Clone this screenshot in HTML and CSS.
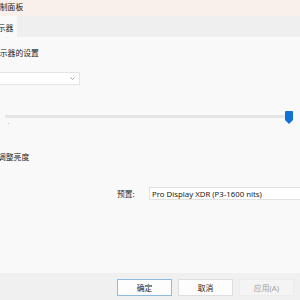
FILE: index.html
```html
<!DOCTYPE html>
<html lang="zh-CN">
<head>
  <meta charset="UTF-8" />
  <title>控制面板</title>
  <link rel="stylesheet" href="styles.css">
</head>
<body>
  <div class="window">
    <div class="titlebar">控制面板</div>

    <div class="tabs">
      <div class="tab active">显示器</div>
    </div>

    <div class="content">
      <div class="label">显示器的设置</div>

      <div class="select">
        <svg class="chevron" width="5" height="3" viewBox="0 0 5 3">
          <path d="M0.5 0.5 L2.5 2.5 L4.5 0.5" fill="none" stroke="#8a8a8a" stroke-width="0.8"/>
        </svg>
      </div>

      <div class="slider">
        <div class="track"></div>
        <span class="tick"></span>
        <svg class="thumb" width="8" height="13" viewBox="0 0 8 13">
          <path d="M1 0 H7 A1 1 0 0 1 8 1 V9 L4 13 L0 9 V1 A1 1 0 0 1 1 0 Z" fill="#1170d8"/>
        </svg>
      </div>

      <div class="label group">调整亮度</div>

      <div class="preset">
        <span class="preset-label">预置:</span>
        <div class="preset-input">Pro Display XDR (P3-1600 nits)</div>
      </div>
    </div>

    <div class="footer">
      <button class="btn primary">确定</button>
      <button class="btn">取消</button>
      <button class="btn disabled">应用(A)</button>
      <button class="btn">帮助</button>
    </div>
  </div>
</body>
</html>
```

FILE: styles.css
```css
* {
  margin: 0;
  padding: 0;
  box-sizing: border-box;
}

body {
  width: 300px;
  height: 300px;
  overflow: hidden;
  background: #f9f9f9;
  font-family: "Noto Sans", "Noto Sans CJK SC", sans-serif;
  font-size: 7.8px;
  color: #222222;
}

.window {
  margin-left: -14px;
  width: 380px;
  display: flex;
  flex-direction: column;
}

/* Title bar */
.titlebar {
  height: 16px;
  line-height: 15px;
  padding-left: 6px;
  background: #f9f0ec;
}

/* Tabs */
.tabs {
  height: 21px;
  display: flex;
  background: #efefef;
}

.tab {
  padding: 0 4px;
  line-height: 25px;
}

.tab.active {
  background: #f9f9f9;
}

/* Content */
.content {
  height: 236px;
  background: #f9f9f9;
  display: flex;
  flex-direction: column;
}

.label {
  margin-top: 10px;
  padding-left: 6px;
  line-height: 12px;
}

.label.group {
  margin-top: 27px;
  padding-left: 12px;
}

.select {
  margin: 13px 0 0 6px;
  width: 88px;
  height: 13px;
  background: #ffffff;
  border: 1px solid #e4e4e4;
  display: flex;
  align-items: center;
  justify-content: flex-end;
  padding-right: 4px;
}

.slider {
  position: relative;
  margin: 26px 0 0 19px;
  width: 288px;
  height: 13px;
}

.track {
  margin-top: 4px;
  width: 285px;
  height: 3px;
  background: #e4e6e6;
}

.tick {
  position: absolute;
  left: 3px;
  top: 12px;
  width: 1px;
  height: 1px;
  background: #c4c4c4;
}

.thumb {
  position: absolute;
  left: 280px;
  top: 0;
}

/* Preset row */
.preset {
  margin: 24px 0 0 131px;
  display: flex;
  align-items: center;
}

.preset-label {
  width: 32px;
  color: #303030;
}

.preset-input {
  width: 200px;
  height: 13px;
  line-height: 12px;
  padding-left: 2px;
  background: #ffffff;
  border: 1px solid #e2e2e2;
}

/* Footer */
.footer {
  height: 27px;
  background: #f0f0f0;
  display: flex;
  gap: 6px;
  padding: 6px 0 0 131px;
}

.btn {
  width: 55px;
  height: 17px;
  font-family: inherit;
  font-size: 7.8px;
  color: #222222;
  background: #fdfdfd;
  border: 1px solid #dedede;
}

.btn.primary {
  border-color: #8dbbe6;
}

.btn.disabled {
  color: #a3a3a3;
  background: #f4f4f4;
  border-color: #ececec;
}
```
